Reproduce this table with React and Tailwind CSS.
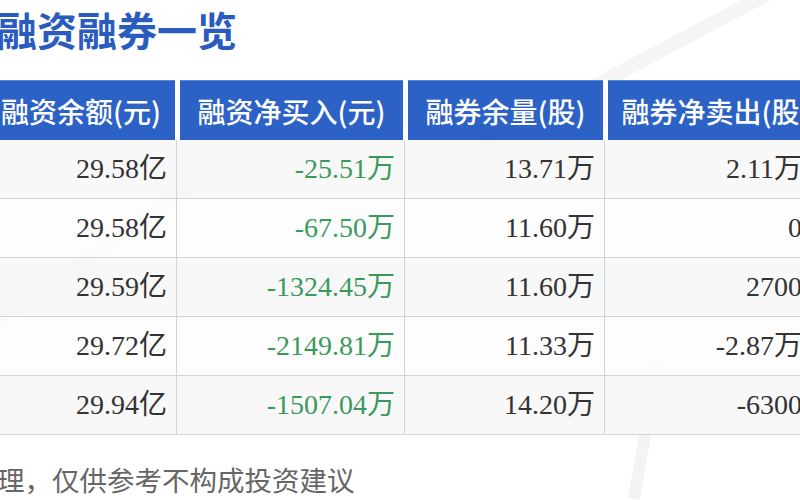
import React from "react";

const rows = [
  ["29.58亿", "-25.51万", "13.71万", "2.11万"],
  ["29.58亿", "-67.50万", "11.60万", "0"],
  ["29.59亿", "-1324.45万", "11.60万", "2700"],
  ["29.72亿", "-2149.81万", "11.33万", "-2.87万"],
  ["29.94亿", "-1507.04万", "14.20万", "-6300"],
];

const heads = ["融资余额(元)", "融资净买入(元)", "融券余量(股)", "融券净卖出(股)"];

export default function App() {
  return (
    <div className="relative w-[800px] h-[500px] overflow-hidden bg-white" style={{ fontFamily: '"Noto Sans CJK SC", sans-serif' }}>
      <div className="absolute inset-0 pointer-events-none overflow-hidden">
        <div className="absolute left-[380px] top-[60px] w-[500px] h-[14px] bg-[#eeeeee] opacity-60 -rotate-[28deg]" />
        <div className="absolute left-[-40px] top-[250px] w-[260px] h-[12px] bg-[#efefef] opacity-70 -rotate-[35deg]" />
        <div className="absolute left-[640px] top-[360px] w-[12px] h-[140px] bg-[#eeeeee] opacity-70 rotate-[10deg]" />
      </div>
      <div className="relative h-[80px] pt-[3px]">
        <div className="ml-[-3px] text-[40px] leading-[52px] font-bold text-[#2a5bbf]">融资融券一览</div>
      </div>
      <div className="relative ml-[-16px] grid grid-cols-[193px_228px_200px_220px]">
        {heads.map((h) => (
          <div key={h} className="h-[60px] border-l-[3px] border-r-[2px] border-white">
            <div className="h-full flex items-center justify-center bg-[#2c61c6] border-t border-[#5686d8] text-white text-[28px] font-medium whitespace-nowrap overflow-hidden">
              {h}
            </div>
          </div>
        ))}
        {rows.map((r, ri) =>
          r.map((v, ci) => (
            <div
              key={ri + "-" + ci}
              className={
                "h-[59px] flex items-center justify-end border-b border-r border-[#cfd5de] text-[28px] whitespace-nowrap " +
                (ci === 3 ? "pr-[22px] " : "pr-[9px] ") +
                (ri % 2 === 0 ? "bg-[#f6f6f6]/80 " : "bg-[#fcfcfc]/80 ") +
                (ci === 1 ? "text-[#3a9a5c]" : "text-[#333333]")
              }
              style={{ fontFamily: '"Liberation Serif", "Noto Sans CJK SC", serif' }}
            >
              {v}
            </div>
          ))
        )}
      </div>
      <div className="relative mt-[27px] ml-[-3px] text-[27.5px] leading-[34px] text-[#666666] whitespace-nowrap">
        理，仅供参考不构成投资建议
      </div>
    </div>
  );
}
